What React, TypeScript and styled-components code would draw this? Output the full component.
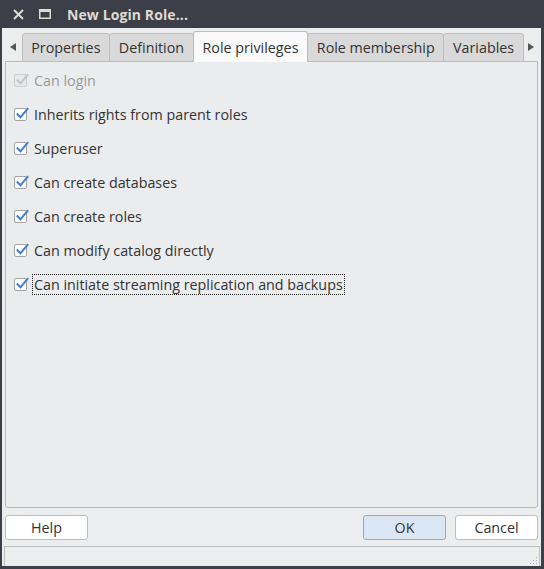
import React from "react";
import styled, { createGlobalStyle } from "styled-components";

const Global = createGlobalStyle`
  html, body { margin: 0; padding: 0; background: #3c3f47; }
  body { font-family: "Open Sans", "Noto Sans", sans-serif; }
`;

const Window = styled.div`
  width: 544px;
  height: 569px;
  display: flex;
  flex-direction: column;
  background: #3c3f47;
  box-sizing: border-box;
  padding: 0 3px 3px 2px;
`;

const TitleBar = styled.div`
  height: 28px;
  flex: none;
  display: flex;
  align-items: center;
  padding-left: 11px;
  color: #dfdbd2;
`;

const TitleIcon = styled.span<{ gap: number }>`
  display: flex;
  align-items: center;
  margin-right: ${(p) => p.gap}px;
`;

const TitleText = styled.span`
  font-family: "Open Sans", sans-serif;
  font-weight: 700;
  font-size: 14px;
  letter-spacing: 0.1px;
`;

const Body = styled.div`
  flex: 1;
  background: #ecedee;
  display: flex;
  flex-direction: column;
  padding: 3px 3px 0 3px;
  min-height: 0;
`;

const TabRow = styled.div`
  display: flex;
  align-items: flex-end;
  height: 31px;
  flex: none;
`;

const Arrow = styled.div<{ w: number }>`
  width: ${(p) => p.w}px;
  height: 31px;
  display: flex;
  align-items: center;
  justify-content: center;
  color: #555;
`;

const Tabs = styled.div`
  flex: 1;
  display: flex;
  align-items: flex-end;
  height: 100%;
`;

const Tab = styled.div<{ active?: boolean }>`
  box-sizing: border-box;
  height: ${(p) => (p.active ? 31 : 29)}px;
  padding: 0 8.7px;
  display: flex;
  align-items: center;
  font-size: 14.3px;
  color: #333;
  background: ${(p) => (p.active ? "#fafafa" : "#d9d9d9")};
  border: 1px solid #bdbdbd;
  border-bottom: ${(p) => (p.active ? "none" : "1px solid #bdbdbd")};
  border-radius: 3px 3px 0 0;
  margin-left: -1px;
  white-space: nowrap;
  position: relative;
  z-index: ${(p) => (p.active ? 2 : 1)};
`;

const Panel = styled.div`
  flex: 1;
  border: 1px solid #b9b9b9;
  border-radius: 0 0 3px 3px;
  margin-top: -1px;
  background: #ebecee;
  padding: 8px 0 0 8px;
  display: flex;
  flex-direction: column;
  gap: 14px;
`;

const Row = styled.label<{ disabled?: boolean }>`
  display: flex;
  align-items: center;
  height: 20px;
  font-size: 14.3px;
  color: ${(p) => (p.disabled ? "#9a9a9a" : "#333")};
`;

const Box = styled.span<{ disabled?: boolean }>`
  width: 13px;
  height: 13px;
  box-sizing: border-box;
  border: 1px solid ${(p) => (p.disabled ? "#cfcfcf" : "#a4a4a4")};
  border-radius: 2px;
  background: ${(p) => (p.disabled ? "#e8e8e8" : "#ffffff")};
  margin-right: 6px;
  position: relative;
  flex: none;
`;

const Label = styled.span<{ focused?: boolean }>`
  padding: 0 1px;
  outline: ${(p) => (p.focused ? "1px dotted #222" : "none")};
  line-height: 19px;
`;

const ButtonRow = styled.div`
  flex: none;
  display: flex;
  align-items: center;
  height: 38px;
  gap: 9px;
`;

const Spacer = styled.div`
  flex: 1;
`;

const Button = styled.button<{ primary?: boolean }>`
  width: 83px;
  height: 25px;
  box-sizing: border-box;
  border: 1px solid ${(p) => (p.primary ? "#96a8c3" : "#bcbcbc")};
  border-radius: 3px;
  background: ${(p) => (p.primary ? "#dbe6f5" : "#ffffff")};
  font-family: inherit;
  font-size: 14.3px;
  color: #333;
  padding: 0;
`;

const StatusBar = styled.div`
  flex: none;
  height: 20px;
  margin: 0 -2px 0 -1px;
  border: 1px solid #bdbdbd;
  border-bottom: none;
  box-sizing: border-box;
  position: relative;
`;

const Grip = styled.svg`
  position: absolute;
  right: 1px;
  bottom: 1px;
`;

const Check = ({ disabled }: { disabled?: boolean }) => (
  <Box disabled={disabled}>
    <svg width="15" height="13" viewBox="0 0 15 13" style={{ position: "absolute", left: 0, top: -2 }}>
      <path
        d="M2.5 7.2 L5.5 10.3 L12.5 1.8"
        fill="none"
        stroke={disabled ? "#c4c4c4" : "#3b7dd8"}
        strokeWidth="2"
        strokeLinecap="square"
      />
    </svg>
  </Box>
);

const items = [
  { text: "Can login", disabled: true },
  { text: "Inherits rights from parent roles" },
  { text: "Superuser" },
  { text: "Can create databases" },
  { text: "Can create roles" },
  { text: "Can modify catalog directly" },
  { text: "Can initiate streaming replication and backups", focused: true },
];

export default function App() {
  return (
    <>
      <Global />
      <Window>
        <TitleBar>
          <TitleIcon gap={15}>
            <svg width="11" height="11" viewBox="0 0 11 11">
              <path d="M1 1 L10 10 M10 1 L1 10" stroke="#dfdbd2" strokeWidth="2" />
            </svg>
          </TitleIcon>
          <TitleIcon gap={16}>
            <svg width="12" height="10" viewBox="0 0 12 10">
              <rect x="0.75" y="0.75" width="10.5" height="8.5" fill="none" stroke="#dfdbd2" strokeWidth="1.5" />
              <rect x="0" y="0" width="12" height="3" fill="#dfdbd2" />
            </svg>
          </TitleIcon>
          <TitleText>New Login Role...</TitleText>
        </TitleBar>
        <Body>
          <TabRow>
            <Arrow w={21}>
              <svg width="7" height="8" viewBox="0 0 7 8">
                <path d="M6 0 L0 4 L6 8 Z" fill="#555" />
              </svg>
            </Arrow>
            <Tabs>
              <Tab>Properties</Tab>
              <Tab>Definition</Tab>
              <Tab active>Role privileges</Tab>
              <Tab>Role membership</Tab>
              <Tab>Variables</Tab>
            </Tabs>
            <Arrow w={17}>
              <svg width="7" height="8" viewBox="0 0 7 8">
                <path d="M1 0 L7 4 L1 8 Z" fill="#555" />
              </svg>
            </Arrow>
          </TabRow>
          <Panel>
            {items.map((it) => (
              <Row key={it.text} disabled={it.disabled}>
                <Check disabled={it.disabled} />
                <Label focused={it.focused}>{it.text}</Label>
              </Row>
            ))}
          </Panel>
          <ButtonRow>
            <Button>Help</Button>
            <Spacer />
            <Button primary>OK</Button>
            <Button>Cancel</Button>
          </ButtonRow>
          <StatusBar>
            <Grip width="10" height="10" viewBox="0 0 10 10">
              {[
                [8, 2], [8, 5], [8, 8], [5, 5], [5, 8], [2, 8],
              ].map(([x, y]) => (
                <rect key={`${x}-${y}`} x={x} y={y} width="1" height="1" fill="#b0b0b0" />
              ))}
            </Grip>
          </StatusBar>
        </Body>
      </Window>
    </>
  );
}
